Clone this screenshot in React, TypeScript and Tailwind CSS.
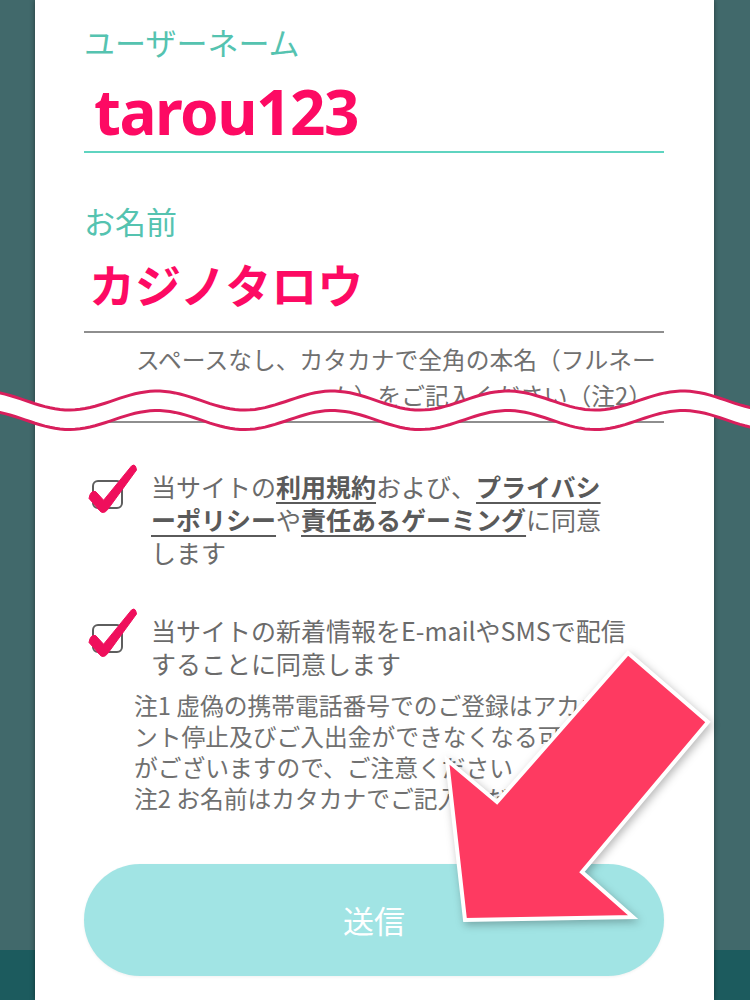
import React from 'react';

const CJK = "font-['Noto_Sans_CJK_JP','Noto_Sans',sans-serif]";

// hand-drawn style "cut" wave across the page
const wavePoints = (offset: number) => {
    const pts: [number, number][] = [];
    for (let x = -10; x <= 760; x += 5) {
        const y = 400.5 + offset - 9.5 * Math.cos((2 * Math.PI * (x - 157)) / 175.3);
        pts.push([x, y]);
    }
    return pts;
};

const WaveCut = () => {
    const upper = wavePoints(0);
    const lower = wavePoints(19.5);
    const line = (pts: [number, number][]) => 'M' + pts.map(([x, y]) => `${x} ${y.toFixed(1)}`).join(' L');
    const band = line(upper) + ' L' + [...lower].reverse().map(([x, y]) => `${x} ${y.toFixed(1)}`).join(' L') + ' Z';
    return (
        <svg className="absolute left-0 top-0 z-20 pointer-events-none" width="750" height="1000" viewBox="0 0 750 1000">
            <path d={band} fill="#ffffff" />
            <path d={line(upper)} fill="none" stroke="#d81f5c" strokeWidth="3" />
            <path d={line(lower)} fill="none" stroke="#d81f5c" strokeWidth="3" />
        </svg>
    );
};

const BigArrow = () => (
    <svg className="absolute left-0 top-0 z-30 pointer-events-none drop-shadow-[2px_3px_4px_rgba(0,0,0,0.28)]" width="750" height="1000" viewBox="0 0 750 1000">
        <polygon
            points="628,653 708,722 582,872 633,917 465,920 447,760 497,802"
            fill="#fe3a61"
            stroke="#ffffff"
            strokeWidth="4"
            strokeLinejoin="miter"
        />
    </svg>
);

const CheckMark = () => (
    <svg className="absolute left-[-5px] top-[-20px] overflow-visible" width="52" height="52" viewBox="0 0 52 52">
        <path
            d="M0 36.4 Q1.5 28 6.7 29.6 L14.6 38.2 L42.5 4 Q46.5 1 47.5 8 L18.6 47.7 Q14 53 10.5 48.5 Z"
            fill="#ef0f5c"
            stroke="#ef0f5c"
            strokeWidth="1"
            strokeLinejoin="round"
        />
    </svg>
);

const CheckRow = ({ children, className }: { children: React.ReactNode; className?: string }) => (
    <div className={`flex items-start ${className ?? ''}`}>
        <div className="relative ml-[8px] mt-[10px] w-[31px] h-[29px] shrink-0 rounded-[6px] border-2 border-[#5e5e5e]">
            <CheckMark />
        </div>
        <div className="ml-[28px] text-[25px] leading-[33px] text-[#6b6b6b] whitespace-nowrap">{children}</div>
    </div>
);

const U = ({ children }: { children: React.ReactNode }) => (
    <span className="font-bold text-[#5a5a5a] underline decoration-2 underline-offset-[5px]">{children}</span>
);

const SideStrip = ({ width }: { width: string }) => (
    <div className={`${width} flex flex-col shrink-0`}>
        <div className="flex-1 bg-[#41696b]" />
        <div className="h-[50px] bg-[#1c5b5e]" />
    </div>
);

export default function App() {
    return (
        <div className={`relative w-[750px] h-[1000px] overflow-hidden flex ${CJK}`}>
            <SideStrip width="w-[35px]" />

            <div className="relative z-10 w-[679px] shrink-0 bg-white pl-[49px] pr-[50px] pt-[23px] shadow-[0_0_5px_rgba(0,0,0,0.45)]">
                {/* username */}
                <div className="text-[31px] leading-[38px] text-[#55c3b0]">ユーザーネーム</div>
                <div className="mt-[15px] pb-[5px] border-b-2 border-[#5fd4c0]">
                    <div className="pl-[10px] font-['Noto_Sans',sans-serif] font-bold text-[62px] leading-[70px] tracking-[-1.5px] text-[#fd0a63]">
                        tarou123
                    </div>
                </div>

                {/* name */}
                <div className="mt-[49px] text-[31px] leading-[38px] text-[#55c3b0]">お名前</div>
                <div className="mt-[15px] pb-[20px] border-b-2 border-[#8e8e8e]">
                    <div className="pl-[5px] font-bold text-[46px] leading-[56px] text-[#fd0a63]">カジノタロウ</div>
                </div>
                <div className="mt-[8px] pl-[52px] text-[23.75px] leading-[36px] text-[#707070] whitespace-nowrap">
                    <div>スペースなし、カタカナで全角の本名（フルネー</div>
                    <div className="text-right pr-[12px]">ム）をご記入ください（注2）</div>
                </div>
                <div className="mt-[8px] border-t-2 border-[#8e8e8e]" />

                {/* agreements */}
                <CheckRow className="mt-[47px]">
                    <div>
                        当サイトの<U>利用規約</U>および、<U>プライバシ</U>
                    </div>
                    <div>
                        <U>ーポリシー</U>や<U>責任あるゲーミング</U>に同意
                    </div>
                    <div>します</div>
                </CheckRow>

                <CheckRow className="mt-[45px]">
                    <div>当サイトの新着情報をE-mailやSMSで配信</div>
                    <div>することに同意します</div>
                </CheckRow>

                <div className="mt-[9px] pl-[50px] text-[23.75px] leading-[31px] text-[#707070] whitespace-nowrap">
                    <div>注1 虚偽の携帯電話番号でのご登録はアカウ</div>
                    <div>ント停止及びご入出金ができなくなる可能性</div>
                    <div>がございますので、ご注意ください</div>
                    <div>注2 お名前はカタカナでご記入ください</div>
                </div>

                <button className="mt-[51px] w-full h-[112px] rounded-full bg-[#a1e4e4] text-white text-[31px] flex items-center justify-center shadow-[0_1px_3px_rgba(0,0,0,0.06)]">
                    送信
                </button>
            </div>

            <SideStrip width="w-[36px]" />

            <WaveCut />
            <BigArrow />
        </div>
    );
}
